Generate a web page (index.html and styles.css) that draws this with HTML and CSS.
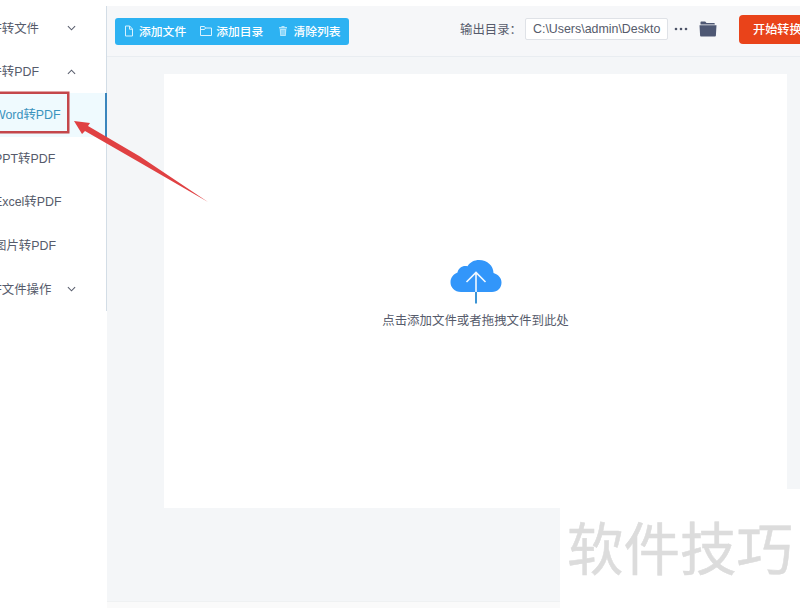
FILE: index.html
```html
<!DOCTYPE html>
<html lang="zh-CN">
<head>
  <meta charset="UTF-8">
  <meta name="viewport" content="width=device-width, initial-scale=1.0">
  <title>PDF转换器</title>
  <link rel="stylesheet" href="styles.css">
</head>
<body>
  <div class="app">
    <nav class="sidebar">
      <div class="menu">
        <div class="menu-item">
          <span>PDF转文件</span>
          <svg class="chevron" viewBox="0 0 10 6"><path d="M1 1l4 4 4-4"/></svg>
        </div>
        <div class="menu-item">
          <span>文件转PDF</span>
          <svg class="chevron" viewBox="0 0 10 6"><path d="M1 5l4-4 4 4"/></svg>
        </div>
        <div class="menu-item sub active"><span>Word转PDF</span></div>
        <div class="menu-item sub"><span>PPT转PDF</span></div>
        <div class="menu-item sub"><span>Excel转PDF</span></div>
        <div class="menu-item sub"><span>图片转PDF</span></div>
        <div class="menu-item">
          <span>PDF文件操作</span>
          <svg class="chevron" viewBox="0 0 10 6"><path d="M1 1l4 4 4-4"/></svg>
        </div>
      </div>
    </nav>

    <main class="main">
      <header class="toolbar">
        <div class="actions">
          <button class="action">
            <svg width="12" height="12" viewBox="0 0 12 12"><path d="M2.5 1h4.2l2.8 3v7h-7zM6.5 1v3.2h3"/></svg>
            <span>添加文件</span>
          </button>
          <button class="action">
            <svg width="12" height="12" viewBox="0 0 12 12"><path d="M.5 10.5v-9h4l1 1.5h6v7.5zM5.5 3L4.5 4.5h-4"/></svg>
            <span>添加目录</span>
          </button>
          <button class="action">
            <svg class="trash" width="12" height="12" viewBox="0 0 12 12"><path d="M2 2h2.5V1h3v1H10v1.5H2zM2.7 4h6.6l-.5 7H3.2z"/><path class="slot" d="M5 5v5M7 5v5"/></svg>
            <span>清除列表</span>
          </button>
        </div>
        <div class="output">
          <span class="output-label">输出目录：</span>
          <div class="output-path">C:\Users\admin\Deskto</div>
          <svg class="dots" width="14" height="4" viewBox="0 0 14 4"><circle cx="2" cy="2" r="1.3"/><circle cx="7" cy="2" r="1.3"/><circle cx="12" cy="2" r="1.3"/></svg>
          <svg class="folder" width="18" height="16" viewBox="0 0 18 16"><path d="M1.5 3.5V1.2Q1.500.5 2.200.5h4l1.300 1.500H15q.8 0 .8.8v.7z"/><path d="M.5 4.200h17L16.900 14.500q0 1-.9 1H2q-.9 0-.9-1z"/></svg>
        </div>
        <button class="start">开始转换</button>
      </header>

      <section class="content">
        <div class="dropzone">
          <svg class="cloud" width="52" height="45" viewBox="0 0 52 45">
            <path class="cloud-body" d="M11 33C4.500 33 .5 28.500 .5 23.300C.5 18.500 3.500 15 7.500 13.500C8.500 8.500 13 6 17.500 7.200C20 3 24.500 1 29 1C37.500 1 43.500 7 43.500 14C48.500 15.500 51.500 19 51.500 23.500C51.500 29 47.500 33 42 33Z"/>
            <path class="cloud-tail" d="M26 33v11.500"/>
            <path class="cloud-arrow" d="M26 33V13.500M16.500 23L26 13.500L35.500 23"/>
          </svg>
          <p>点击添加文件或者拖拽文件到此处</p>
        </div>
      </section>
    </main>
  </div>

  <div class="highlight"></div>
  <svg class="pointer" width="136" height="84" viewBox="0 0 136 84"><path d="M1 1L17 3L15 6L67 36.500L135 82L65 41.500L12 11L9 14Z"/></svg>
  <div class="watermark">软件技巧</div>
</body>
</html>
```
FILE: styles.css
```css
* {
  box-sizing: border-box;
}
body {
  margin: 0;
  height: 608px;
  overflow: hidden;
  position: relative;
  background-color: #fff;
  color: #565b6b;
  font-family: "Liberation Sans", "Noto Sans CJK SC", sans-serif;
  font-size: 12.4px;
}
button {
  border: none;
  padding: 0;
  background: none;
  color: #fff;
  font-family: inherit;
}
.app {
  display: flex;
  height: 608px;
  padding-top: 6px;
}
.sidebar {
  width: 107px;
  flex-shrink: 0;
  overflow: hidden;
}
/* the menu runs past the left edge of the window */
.menu {
  margin-left: -23px;
  border-right: 1px solid #d3dde6;
}
.menu-item {
  display: flex;
  align-items: center;
  justify-content: space-between;
  height: 43.5px;
  padding-right: 30px;
  white-space: nowrap;
}
.menu-item.sub {
  padding-left: 17px;
  padding-bottom: 1px;
}
.menu-item.active {
  margin-right: -1px;
  background-color: #effafe;
  border-right: 2px solid #3a86bd;
  color: #3b93bd;
}
.chevron {
  width: 9px;
  height: 6px;
  margin-top: 1px;
  fill: none;
  stroke: #5a5f6e;
  stroke-width: 1.2;
}
.main {
  flex: 1;
  min-width: 0;
  display: flex;
  flex-direction: column;
  height: 596px;
  background-color: #f4f6f8;
  border-bottom: 1px solid #eff1f2;
  box-shadow: 0 6px 0 #fafafa;
}
.toolbar {
  display: flex;
  align-items: flex-start;
  height: 51px;
  padding-left: 8px;
  overflow: hidden;
  background-color: #f6f7f9;
  border-bottom: 1px solid #e9edf1;
}
.actions {
  display: flex;
  align-items: center;
  gap: 14px;
  width: 234px;
  height: 27px;
  margin-top: 12px;
  padding: 0 0 2px 8px;
  background-color: #2db2f2;
  border-radius: 3px;
  flex-shrink: 0;
}
.action {
  display: flex;
  align-items: center;
  gap: 4px;
  font-size: 11.8px;
  font-weight: 500;
  white-space: nowrap;
}
.action svg {
  fill: none;
  stroke: #d8f2ff;
  stroke-width: 1;
}
.action .trash {
  fill: #b5e6fc;
  stroke: none;
}
.action .slot {
  stroke: #2db2f2;
  stroke-width: 0.6;
}
.output {
  display: flex;
  align-items: center;
  height: 22px;
  margin: 12px 0 0 111px;
  flex-shrink: 0;
}
.output-label {
  width: 65px;
  padding-bottom: 1px;
  white-space: nowrap;
}
.output-path {
  width: 143px;
  height: 22px;
  padding-left: 7px;
  border: 1px solid #dfe2e7;
  border-radius: 2px;
  background-color: #fff;
  font-size: 12.4px;
  line-height: 21px;
  white-space: nowrap;
}
.dots {
  margin-left: 6px;
  fill: #4d5468;
}
.folder {
  margin-left: 11px;
  fill: #4e5874;
}
.start {
  width: 90px;
  height: 29px;
  margin: 9px -30px 0 22px;
  padding: 0 0 2px 14px;
  border-radius: 4px;
  background-color: #e9431a;
  font-size: 12.2px;
  font-weight: 500;
  text-align: left;
  white-space: nowrap;
  flex-shrink: 0;
}
.content {
  flex: 1;
  padding: 17px 13px 0 57px;
}
.dropzone {
  display: flex;
  flex-direction: column;
  align-items: center;
  height: 434px;
  padding-top: 185px;
  background-color: #fff;
}
.dropzone p {
  margin: 8px 0 0;
  font-size: 12.45px;
  line-height: 18px;
}
.cloud {
  fill: none;
}
.cloud-body {
  fill: #3296fa;
}
.cloud-arrow {
  stroke: #f2f9ff;
  stroke-width: 1.6;
}
.cloud-tail {
  stroke: #3d95d5;
  stroke-width: 2;
}
.highlight {
  position: absolute;
  left: -3px;
  top: 92px;
  width: 72px;
  height: 41px;
  border: 2px solid #c4474b;
  box-shadow: 0 0 0 0.5px #c4474b;
}
.pointer {
  position: absolute;
  left: 73px;
  top: 120px;
  fill: #e04143;
}
.watermark {
  position: absolute;
  left: 560px;
  top: 489px;
  width: 240px;
  height: 119px;
  padding-left: 7px;
  background-color: #fff;
  color: #dcdcdc;
  font-family: "Noto Sans CJK SC", sans-serif;
  font-size: 56.5px;
  line-height: 113px;
  white-space: nowrap;
  -webkit-text-stroke: 0.5px #dcdcdc;
}
```
